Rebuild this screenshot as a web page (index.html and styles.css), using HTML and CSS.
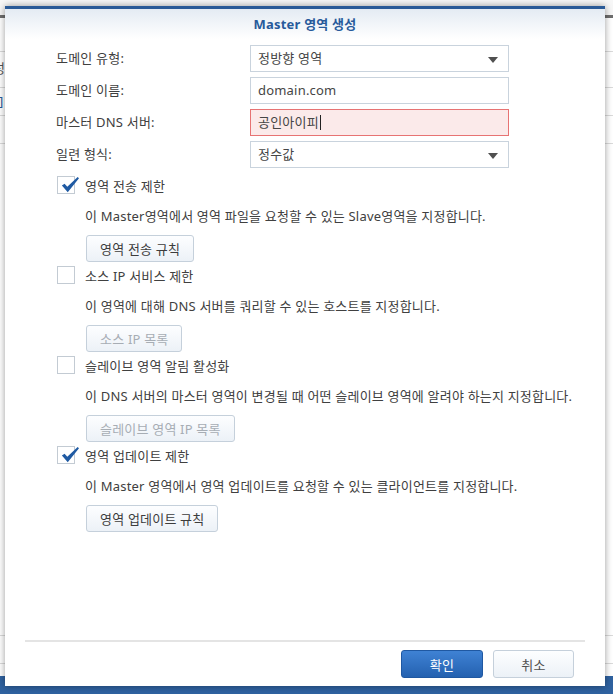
FILE: index.html
```html
<html>
	<head>
		<meta charset="utf-8">
		<link rel="stylesheet" href="styles.css">
	</head>
	<body>
		<div class="app">
  <div class="app-top"></div>
  <div class="app-bar"></div>
  <div class="toolbar"></div>
  <div class="grid-row tall"><span class="frag">성</span></div>
  <div class="grid-row"><span class="frag link">]</span></div>
  <div class="grid-row"><span class="frag">a</span></div>
  <div class="grid-fill"></div>
  <div class="grid-row"></div>
  <div class="grid-row short"></div>
</div>

<div class="dialog">
  <div class="dlg-head">Master 영역 생성</div>
  <div class="dlg-body">
    <div class="form">
      <div class="form-row">
        <label class="lbl">도메인 유형:</label>
        <div class="field select">정방향 영역<span class="caret"></span></div>
      </div>
      <div class="form-row">
        <label class="lbl">도메인 이름:</label>
        <div class="field">domain.com</div>
      </div>
      <div class="form-row">
        <label class="lbl">마스터 DNS 서버:</label>
        <div class="field invalid">공인아이피<span class="cursor"></span></div>
      </div>
      <div class="form-row">
        <label class="lbl">일련 형식:</label>
        <div class="field select">정수값<span class="caret"></span></div>
      </div>
    </div>

    <div class="opts">
      <div class="opt">
        <div class="check-row">
          <span class="box"><svg class="tick" viewBox="0 0 22 20"><path d="M2 10.5 L5 8.5 L8 12 L19.5 1 L21 2.5 L8.5 18 Z"/></svg></span>
          <span>영역 전송 제한</span>
        </div>
        <p class="desc">이 Master영역에서 영역 파일을 요청할 수 있는 Slave영역을 지정합니다.</p>
        <button class="btn">영역 전송 규칙</button>
      </div>
      <div class="opt">
        <div class="check-row">
          <span class="box"></span>
          <span>소스 IP 서비스 제한</span>
        </div>
        <p class="desc">이 영역에 대해 DNS 서버를 쿼리할 수 있는 호스트를 지정합니다.</p>
        <button class="btn" disabled>소스 IP 목록</button>
      </div>
      <div class="opt">
        <div class="check-row">
          <span class="box"></span>
          <span>슬레이브 영역 알림 활성화</span>
        </div>
        <p class="desc">이 DNS 서버의 마스터 영역이 변경될 때 어떤 슬레이브 영역에 알려야 하는지 지정합니다.</p>
        <button class="btn" disabled>슬레이브 영역 IP 목록</button>
      </div>
      <div class="opt">
        <div class="check-row">
          <span class="box"><svg class="tick" viewBox="0 0 22 20"><path d="M2 10.5 L5 8.5 L8 12 L19.5 1 L21 2.5 L8.5 18 Z"/></svg></span>
          <span>영역 업데이트 제한</span>
        </div>
        <p class="desc">이 Master 영역에서 영역 업데이트를 요청할 수 있는 클라이언트를 지정합니다.</p>
        <button class="btn">영역 업데이트 규칙</button>
      </div>
    </div>
  </div>
  <div class="dlg-foot">
    <button class="btn primary">확인</button>
    <button class="btn cancel">취소</button>
  </div>
</div>
	</body>
</html>
```

FILE: styles.css
```css
body {
  margin: 0;
  width: 613px;
  height: 694px;
  overflow: hidden;
  position: relative;
  background: linear-gradient(#2c5a93, #2f62a0);
  font-family: "Noto Sans", "Noto Sans CJK KR", sans-serif;
  font-size: 13px;
  letter-spacing: 0.2px;
  color: #404040;
}

/* page behind the dialog */
.app {
  height: 676px;
  background: #fff;
  display: flex;
  flex-direction: column;
}

.app-top {
  height: 15px;
  background: #f7f7f7;
}

.app-bar {
  height: 3px;
  background: #6e6e6e;
}

.toolbar {
  height: 33px;
  border-bottom: 1px solid #dadada;
}

.grid-row {
  height: 27px;
  border-bottom: 1px solid #dadada;
  line-height: 27px;
}

.grid-row.tall {
  height: 35px;
  line-height: 32px;
}

.grid-row.short {
  height: 12px;
  border-bottom: none;
}

.grid-fill {
  flex: 1;
  border-bottom: 1px solid #dadada;
}

.frag {
  display: inline-block;
  margin-left: -7px;
  color: #555;
}

.frag.link {
  margin-left: -1px;
  color: #2a5a98;
}

/* dialog */
.dialog {
  position: absolute;
  left: 5px;
  top: 6px;
  width: 600px;
  height: 680px;
  box-sizing: border-box;
  border-top: 3px solid #2a5a97;
  background: #fff;
  box-shadow: 0 0 7px rgba(0, 0, 0, 0.4);
  display: flex;
  flex-direction: column;
}

.dlg-head {
  height: 30px;
  line-height: 31px;
  text-align: center;
  font-weight: bold;
  font-size: 13px;
  color: #275a9b;
  background: linear-gradient(#e4ebf3, #ffffff);
}

.dlg-body {
  padding: 6px 0 0 51px;
}

.form {
  display: flex;
  flex-direction: column;
  gap: 5px;
}

.form-row {
  display: flex;
  height: 27px;
}

.lbl {
  width: 194px;
  line-height: 27px;
}

.field {
  position: relative;
  width: 259px;
  box-sizing: border-box;
  border: 1px solid #c9d3dd;
  padding: 0 7px;
  line-height: 25px;
  color: #454545;
}

.field.invalid {
  background: #fbeaea;
  border-color: #e77373;
}

.cursor {
  display: inline-block;
  width: 1px;
  height: 15px;
  margin-left: 1px;
  background: #222;
  vertical-align: -3px;
}

.caret {
  position: absolute;
  right: 10px;
  top: 11px;
  border-left: 5px solid transparent;
  border-right: 5px solid transparent;
  border-top: 6px solid #505050;
}

.opts {
  margin-top: 8px;
  display: flex;
  flex-direction: column;
  gap: 4px;
}

.opt {
  display: flex;
  flex-direction: column;
  align-items: flex-start;
}

.check-row {
  display: flex;
  align-items: center;
  gap: 10px;
  height: 18px;
  margin-left: 1px;
}

.box {
  position: relative;
  width: 18px;
  height: 18px;
  box-sizing: border-box;
  border: 1px solid #c3cbd3;
  background: #fff;
}

.tick {
  position: absolute;
  left: 1px;
  top: -1px;
  width: 22px;
  height: 18px;
  fill: #1f5aa3;
}

.desc {
  margin: 12px 0 0 29px;
  line-height: 20px;
  height: 18px;
}

.btn {
  margin: 11px 0 0 30px;
  height: 27px;
  padding: 0 13px;
  border: 1px solid #c5d0db;
  border-radius: 3px;
  background: linear-gradient(#fdfeff, #ecf1f7);
  font-family: inherit;
  font-size: 13px;
  letter-spacing: inherit;
  color: #3c3c3c;
}

.btn:disabled {
  color: #a7adb4;
}

.dlg-foot {
  margin: auto 20px 0;
  border-top: 2px solid #e4e4e4;
  padding: 8px 11px 8px 0;
  display: flex;
  justify-content: flex-end;
  gap: 10px;
}

.dlg-foot .btn {
  margin: 0;
  height: 28px;
}

.btn.primary {
  width: 82px;
  border-color: #1f58a2;
  background: linear-gradient(#3f82d4, #2461b0);
  color: #fff;
}

.btn.cancel {
  width: 81px;
  color: #505050;
}
```
